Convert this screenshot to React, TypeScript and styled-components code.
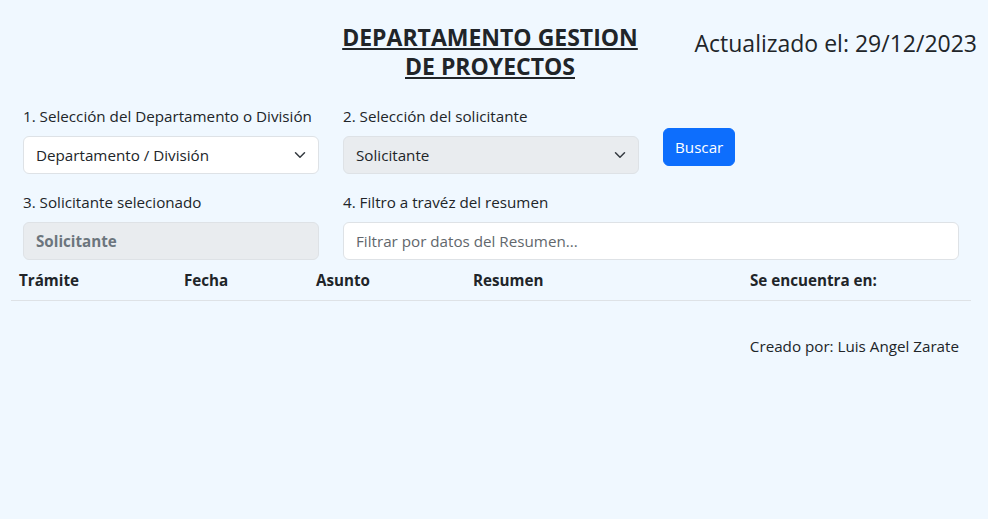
import React from "react";
import styled, { createGlobalStyle } from "styled-components";

const GlobalStyle = createGlobalStyle`
  html, body { margin: 0; padding: 0; }
  body {
    background: #f0f8ff;
    font-family: "Open Sans", "Noto Sans", sans-serif;
    color: #212529;
    font-size: 15.2px;
  }
  * { box-sizing: border-box; }
`;

const Page = styled.div`
  padding: 23px 11px 0 11px;
`;

const Header = styled.header`
  display: grid;
  grid-template-columns: 1fr auto 1fr;
  align-items: start;
`;

const Title = styled.h1`
  grid-column: 2;
  margin: 0 8px 0 0;
  font-size: 23px;
  font-weight: 700;
  line-height: 29px;
  text-align: center;
  text-decoration: underline;
  width: 310px;
`;

const DateText = styled.div`
  grid-column: 3;
  justify-self: end;
  margin-top: 6px;
  font-size: 23px;
  font-weight: 500;
  line-height: 29px;
`;

const FormGrid = styled.div`
  display: grid;
  grid-template-columns: repeat(3, 320px);
  row-gap: 16px;
  margin-top: 23px;
`;

const Field = styled.div<{ $span?: number }>`
  grid-column: span ${(p) => p.$span ?? 1};
  padding: 0 12px;
  display: flex;
  flex-direction: column;
`;

const Label = styled.label`
  line-height: 24px;
  margin-bottom: 8px;
  white-space: nowrap;
`;

const SelectWrap = styled.div`
  position: relative;
`;

const Select = styled.select<{ $disabled?: boolean }>`
  appearance: none;
  width: 100%;
  height: 38px;
  padding: 6px 36px 6px 12px;
  font: inherit;
  color: #212529;
  background: ${(p) => (p.$disabled ? "#e9ecef" : "#fff")};
  border: 1px solid #dee2e6;
  border-radius: 6px;
`;

const Chevron = styled.svg`
  position: absolute;
  right: 13px;
  top: 13px;
  width: 12px;
  height: 12px;
  pointer-events: none;
`;

const Input = styled.input<{ $bold?: boolean }>`
  width: 100%;
  height: 38px;
  padding: 6px 12px;
  font: inherit;
  font-weight: ${(p) => (p.$bold ? 700 : 400)};
  color: ${(p) => (p.$bold ? "#6c757d" : "#212529")};
  background: ${(p) => (p.$bold ? "#e9ecef" : "#fff")};
  border: 1px solid #dee2e6;
  border-radius: 6px;
  &::placeholder { color: #62676c; opacity: 1; }
  &:disabled { -webkit-text-fill-color: #6c757d; }
`;

const ButtonCell = styled.div`
  padding: 24px 12px 0 12px;
`;

const Button = styled.button`
  height: 38px;
  padding: 6px 11px;
  font: inherit;
  color: #fff;
  background: #0d6efd;
  border: 1px solid #0d6efd;
  border-radius: 6px;
`;

const Table = styled.table`
  width: 960px;
  border-collapse: collapse;
`;

const Th = styled.th<{ $w: number }>`
  width: ${(p) => p.$w}px;
  text-align: left;
  font-weight: 700;
  padding: 8px;
  line-height: 24px;
  border-bottom: 1px solid #dee2e6;
`;

const Footer = styled.div`
  width: 960px;
  text-align: right;
  margin-top: 33px;
  line-height: 24px;
  padding-right: 12px;
`;

const ChevronIcon = () => (
  <Chevron viewBox="0 0 16 16">
    <path
      d="m2 5 6 6 6-6"
      fill="none"
      stroke="#343a40"
      strokeWidth="2"
      strokeLinecap="round"
      strokeLinejoin="round"
    />
  </Chevron>
);

export default function App() {
  return (
    <>
      <GlobalStyle />
      <Page>
        <Header>
          <Title>DEPARTAMENTO GESTION DE PROYECTOS</Title>
          <DateText>Actualizado el: 29/12/2023</DateText>
        </Header>
        <FormGrid>
          <Field>
            <Label>1. Selección del Departamento o División</Label>
            <SelectWrap>
              <Select defaultValue="d">
                <option value="d">Departamento / División</option>
              </Select>
              <ChevronIcon />
            </SelectWrap>
          </Field>
          <Field>
            <Label>2. Selección del solicitante</Label>
            <SelectWrap>
              <Select $disabled defaultValue="s">
                <option value="s">Solicitante</option>
              </Select>
              <ChevronIcon />
            </SelectWrap>
          </Field>
          <ButtonCell>
            <Button>Buscar</Button>
          </ButtonCell>
          <Field>
            <Label>3. Solicitante selecionado</Label>
            <Input $bold disabled value="Solicitante" readOnly />
          </Field>
          <Field $span={2}>
            <Label>4. Filtro a travéz del resumen</Label>
            <Input placeholder="Filtrar por datos del Resumen..." />
          </Field>
        </FormGrid>
        <Table>
          <thead>
            <tr>
              <Th $w={165}>Trámite</Th>
              <Th $w={132}>Fecha</Th>
              <Th $w={157}>Asunto</Th>
              <Th $w={277}>Resumen</Th>
              <Th $w={229}>Se encuentra en:</Th>
            </tr>
          </thead>
        </Table>
        <Footer>Creado por: Luis Angel Zarate</Footer>
      </Page>
    </>
  );
}
